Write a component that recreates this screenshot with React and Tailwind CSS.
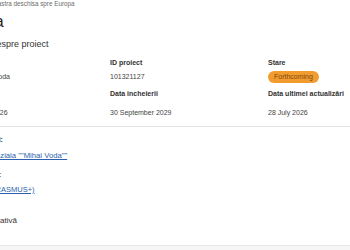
import React from "react";

const Label = ({ children }) => (
  <div className="text-[7px] leading-[10px] font-bold text-[#333]">{children}</div>
);

const Value = ({ children }) => (
  <div className="text-[7px] leading-[10px] text-[#444]">{children}</div>
);

const App = () => {
  return (
    <div className="w-[350px] h-[250px] overflow-hidden bg-white font-['Liberation_Sans',Arial,sans-serif] flex flex-col">
      <div className="border-b border-[#e4e4e4] h-[127px] shrink-0">
        <div className="-ml-[48px] w-[520px]">
          <p className="text-[6.3px] leading-[8px] text-[#6b6b6b]">
            Proiecte / O fereastra deschisa spre Europa
          </p>
          <h1 className="mt-[5px] text-[16px] leading-[18px] text-[#222]">Europa</h1>
          <h2 className="mt-[7px] text-[9px] leading-[12px] text-[#333]">Informații despre proiect</h2>

          <div className="grid grid-cols-[158px_158px_158px] mt-[8px]">
            <Label>Coordonator</Label>
            <Label>ID proiect</Label>
            <Label>Stare</Label>

            <div className="mt-[3px] h-[12px] flex items-center">
              <Value>Scoala Mihai Voda</Value>
            </div>
            <div className="mt-[3px] h-[12px] flex items-center">
              <Value>101321127</Value>
            </div>
            <div className="mt-[3px] h-[12px] flex items-center">
              <span className="inline-flex items-center h-[12px] px-[6px] rounded-full bg-[#f29c30] text-[7px] text-[#7b4a12]">
                Forthcoming
              </span>
            </div>

            <div className="mt-[6px]">
              <Label>Data începerii</Label>
            </div>
            <div className="mt-[6px]">
              <Label>Data incheierii</Label>
            </div>
            <div className="mt-[6px]">
              <Label>Data ultimei actualizări</Label>
            </div>

            <div className="mt-[9px]">
              <Value>1 December 2026</Value>
            </div>
            <div className="mt-[9px]">
              <Value>30 September 2029</Value>
            </div>
            <div className="mt-[9px]">
              <Value>28 July 2026</Value>
            </div>
          </div>
        </div>
      </div>

      <div className="h-[119px] shrink-0 border-b border-[#e8e8e8]">
        <div className="-ml-[48px] w-[520px] pt-[8px]">
          <Label>Coordonatorul:</Label>
          <a className="block mt-[6px] text-[7.7px] leading-[10px] text-[#2b5fae] underline">
            Scoala Gimnaziala ""Mihai Voda""
          </a>
          <div className="mt-[9px]">
            <Label>Finanțare prin:</Label>
          </div>
          <a className="block mt-[5px] text-[7.5px] leading-[10px] text-[#2b5fae] underline">
            Erasmus+ (ERASMUS+)
          </a>
          <h2 className="mt-[20px] text-[8px] leading-[12px] text-[#333]">Descriere narativă</h2>
        </div>
      </div>

      <div className="flex-1 bg-[#f6f6f6]" />
    </div>
  );
};

export default App;
